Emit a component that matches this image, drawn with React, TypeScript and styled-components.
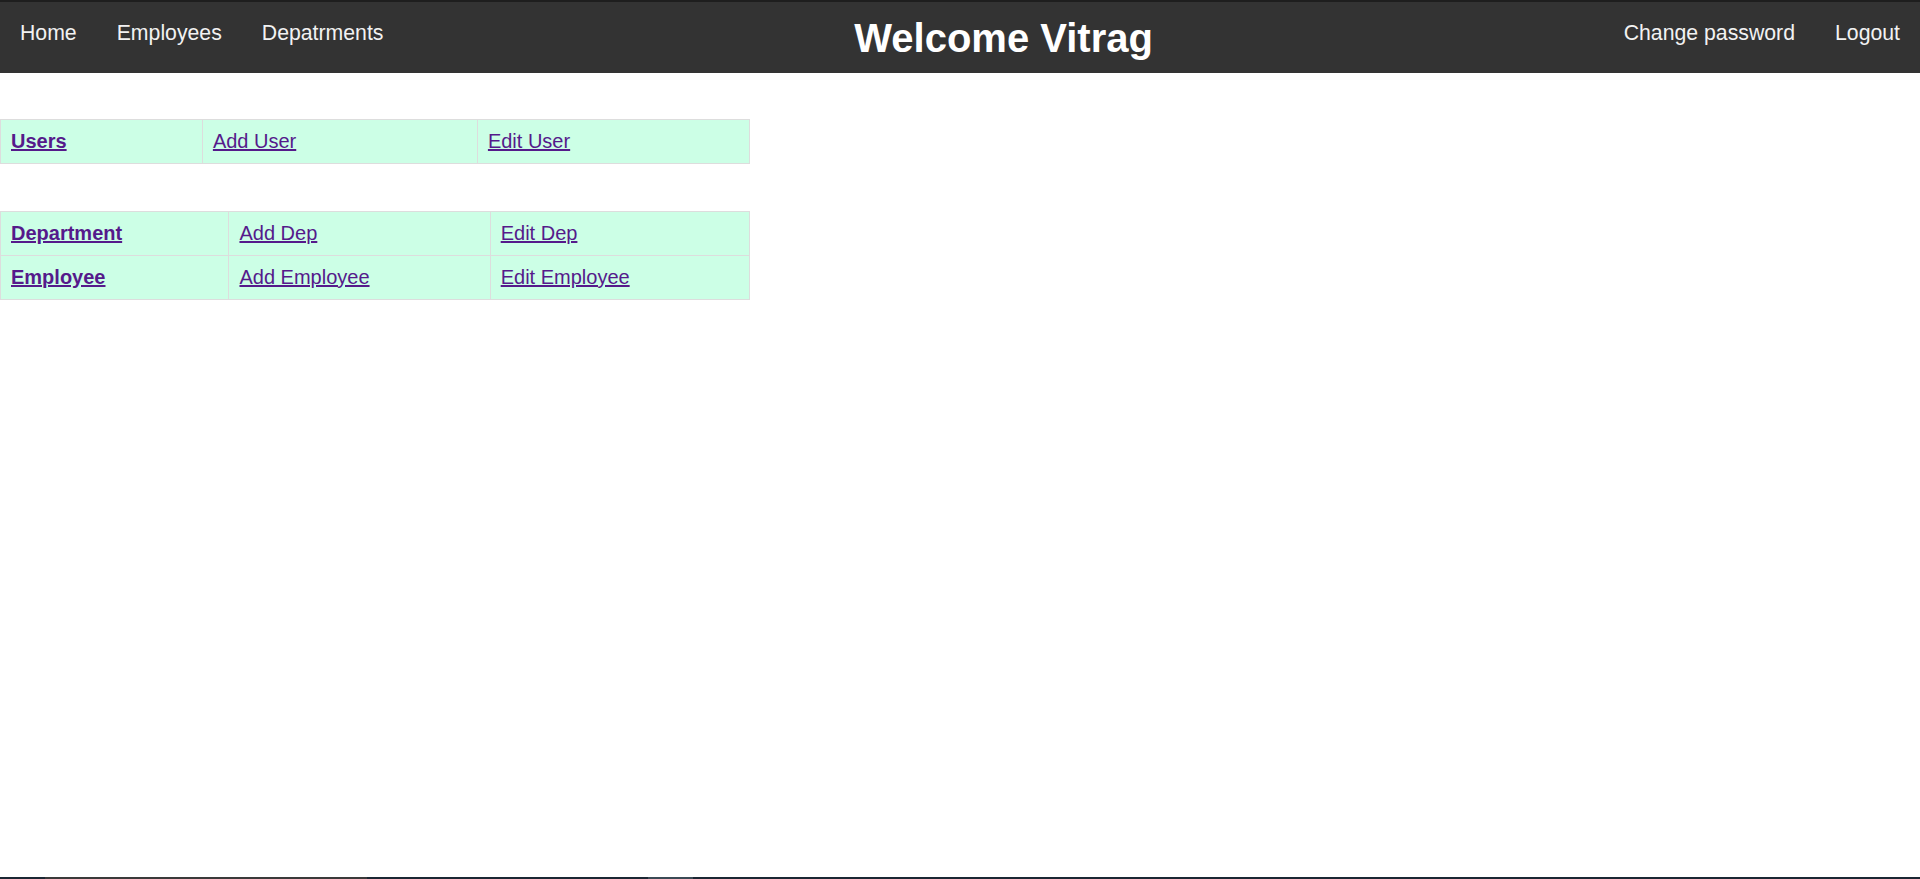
import React from "react";
import styled, { createGlobalStyle } from "styled-components";

const GlobalStyle = createGlobalStyle`
  html, body {
    margin: 0;
    padding: 0;
    background: #ffffff;
  }
  body {
    font-family: "Liberation Sans", Arial, sans-serif;
  }
`;

const Page = styled.div`
  min-height: 100vh;
  display: flex;
  flex-direction: column;
`;

const Main = styled.main`
  flex: 1;
  display: flex;
  flex-direction: column;
  align-items: flex-start;
`;

const TopNav = styled.nav`
  display: flex;
  align-items: flex-start;
  height: 71px;
  background: #333333;
  border-top: 2px solid #1e1e1e;
`;

const NavGroup = styled.div`
  display: flex;
`;

const NavLink = styled.a`
  display: block;
  color: #f2f2f2;
  text-decoration: none;
  font-size: 21.25px;
  line-height: 24px;
  padding: 19px 20px 0;
  cursor: pointer;
`;

const Title = styled.h1`
  flex: 1;
  margin: 13px 0 0;
  color: #ffffff;
  font-size: 40px;
  line-height: 46px;
  font-weight: bold;
  text-align: center;
`;

const MenuTable = styled.table<{ $top: number }>`
  width: 750px;
  margin-top: ${(p) => p.$top}px;
  border-collapse: collapse;
  background: #ccffe6;
`;

const Cell = styled.td`
  border: 1px solid #dddddd;
  padding: 10px 10px 10px;
  font-size: 20px;
  line-height: 23px;
`;

const MenuLink = styled.a<{ $strong?: boolean }>`
  color: #551a8b;
  text-decoration: underline;
  font-weight: ${(p) => (p.$strong ? "bold" : "normal")};
  cursor: pointer;
`;

const Taskbar = styled.div`
  display: flex;
  height: 2px;
  background: #1b2733;
`;

const TaskSegment = styled.div<{ $w: number; $c: string }>`
  width: ${(p) => p.$w}px;
  background: ${(p) => p.$c};
`;

type Row = { main: string; add: string; edit: string };

const usersRows: Row[] = [{ main: "Users", add: "Add User", edit: "Edit User" }];
const orgRows: Row[] = [
  { main: "Department", add: "Add Dep", edit: "Edit Dep" },
  { main: "Employee", add: "Add Employee", edit: "Edit Employee" },
];

function Menu({ rows, top }: { rows: Row[]; top: number }) {
  return (
    <MenuTable $top={top}>
      <tbody>
        {rows.map((r) => (
          <tr key={r.main}>
            <Cell>
              <MenuLink href="#" $strong>
                {r.main}
              </MenuLink>
            </Cell>
            <Cell>
              <MenuLink href="#">{r.add}</MenuLink>
            </Cell>
            <Cell>
              <MenuLink href="#">{r.edit}</MenuLink>
            </Cell>
          </tr>
        ))}
      </tbody>
    </MenuTable>
  );
}

export default function App() {
  return (
    <>
      <GlobalStyle />
      <Page>
        <TopNav>
          <NavGroup>
            <NavLink href="#">Home</NavLink>
            <NavLink href="#">Employees</NavLink>
            <NavLink href="#">Depatrments</NavLink>
          </NavGroup>
          <Title>Welcome Vitrag</Title>
          <NavGroup>
            <NavLink href="#">Change password</NavLink>
            <NavLink href="#">Logout</NavLink>
          </NavGroup>
        </TopNav>
        <Main>
          <Menu rows={usersRows} top={46} />
          <Menu rows={orgRows} top={47} />
        </Main>
        <Taskbar>
          <TaskSegment $w={45} $c="#1b2733" />
          <TaskSegment $w={322} $c="#3a3a3a" />
          <TaskSegment $w={281} $c="#1b2733" />
          <TaskSegment $w={45} $c="#3b4a55" />
        </Taskbar>
      </Page>
    </>
  );
}
